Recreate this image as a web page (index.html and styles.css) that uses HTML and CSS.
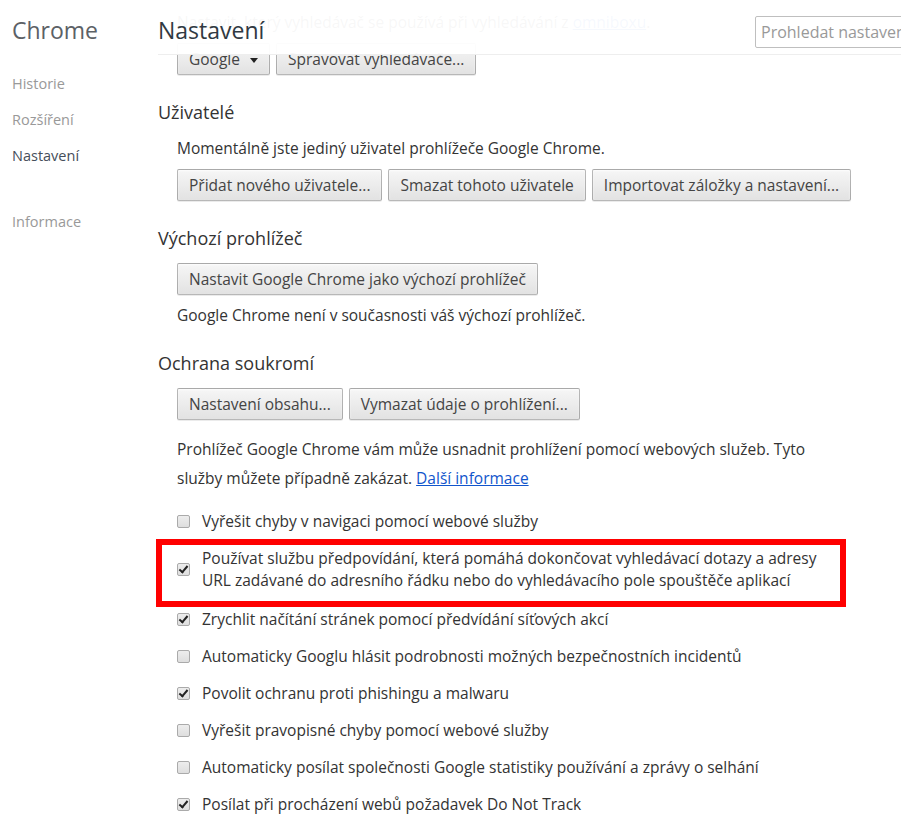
FILE: index.html
```html
<!DOCTYPE html>
<html lang="cs">
<head>
  <meta charset="UTF-8">
  <meta name="viewport" content="width=device-width, initial-scale=1.0">
  <title>Nastavení</title>
  <link rel="stylesheet" href="styles.css">
</head>
<body>

  <div class="layout">
    <nav class="sidebar">
      <h1 class="brand">Chrome</h1>
      <ul class="nav">
        <li>Historie</li>
        <li>Rozšíření</li>
        <li class="selected">Nastavení</li>
        <li class="separated">Informace</li>
      </ul>
    </nav>

    <main class="main">
      <header class="page-header">
        <h1 class="page-title">Nastavení</h1>
        <input type="search" class="search" placeholder="Prohledat nastavení">
      </header>

      <div class="content">
        <!-- sekce vyhledávání, odscrollovaná pod hlavičku -->
        <section class="section scrolled">
          <div class="section-body">
            <p class="text">Nastavit, který vyhledávač se používá při vyhledávání z <a href="#">omniboxu</a>.</p>
            <div class="buttons">
              <button class="btn">Google <span class="caret"></span></button>
              <button class="btn">Spravovat vyhledávače...</button>
            </div>
          </div>
        </section>

        <section class="section">
          <h3>Uživatelé</h3>
          <div class="section-body">
            <p class="text">Momentálně jste jediný uživatel prohlížeče Google Chrome.</p>
            <div class="buttons">
              <button class="btn">Přidat nového uživatele...</button>
              <button class="btn">Smazat tohoto uživatele</button>
              <button class="btn">Importovat záložky a nastavení...</button>
            </div>
          </div>
        </section>

        <section class="section">
          <h3>Výchozí prohlížeč</h3>
          <div class="section-body">
            <div class="buttons">
              <button class="btn">Nastavit Google Chrome jako výchozí prohlížeč</button>
            </div>
            <p class="text after-buttons">Google Chrome není v současnosti váš výchozí prohlížeč.</p>
          </div>
        </section>

        <section class="section">
          <h3>Ochrana soukromí</h3>
          <div class="section-body">
            <div class="buttons">
              <button class="btn">Nastavení obsahu...</button>
              <button class="btn">Vymazat údaje o prohlížení...</button>
            </div>
            <p class="text note">Prohlížeč Google Chrome vám může usnadnit prohlížení pomocí webových služeb. Tyto služby můžete případně zakázat. <a href="#">Další informace</a></p>

            <div class="checks">
              <label class="check"><span class="box"></span><span>Vyřešit chyby v navigaci pomocí webové služby</span></label>
              <label class="check highlight"><span class="box checked"></span><span>Používat službu předpovídání, která pomáhá dokončovat vyhledávací dotazy a adresy URL zadávané do adresního řádku nebo do vyhledávacího pole spouštěče aplikací</span></label>
              <label class="check"><span class="box checked"></span><span>Zrychlit načítání stránek pomocí předvídání síťových akcí</span></label>
              <label class="check"><span class="box"></span><span>Automaticky Googlu hlásit podrobnosti možných bezpečnostních incidentů</span></label>
              <label class="check"><span class="box checked"></span><span>Povolit ochranu proti phishingu a malwaru</span></label>
              <label class="check"><span class="box"></span><span>Vyřešit pravopisné chyby pomocí webové služby</span></label>
              <label class="check"><span class="box"></span><span>Automaticky posílat společnosti Google statistiky používání a zprávy o selhání</span></label>
              <label class="check"><span class="box checked"></span><span>Posílat při procházení webů požadavek Do Not Track</span></label>
            </div>
          </div>
        </section>
      </div>
    </main>
  </div>

</body>
</html>
```

FILE: styles.css
```css
body {
  margin: 0;
  font-family: "Open Sans", "Noto Sans", sans-serif;
  font-size: 15.5px;
  color: #333;
  background-color: #fff;
}

.layout {
  display: flex;
  height: 821px;
  overflow: hidden;
}

/* levý panel */
.sidebar {
  width: 146px;
  flex-shrink: 0;
  padding-left: 12px;
}

.brand {
  margin: 14px 0 0;
  font-size: 23px;
  font-weight: normal;
  line-height: 32px;
  color: #5c6166;
}

.nav {
  list-style: none;
  margin: 26px 0 0;
  padding: 0;
}

.nav li {
  font-size: 14.5px;
  line-height: 24px;
  margin-bottom: 12px;
  color: #999;
}

.nav li.selected {
  color: #464e5a;
}

.nav li.separated {
  margin-top: 42px;
}

/* hlavní část */
.main {
  flex: 1;
  min-width: 0;
  position: relative;
}

.page-header {
  position: absolute;
  top: 0;
  left: 0;
  right: 0;
  height: 54px;
  display: flex;
  align-items: flex-start;
  justify-content: space-between;
  background-color: rgba(255, 255, 255, 0.96);
  border-bottom: 1px solid #eee;
  overflow: hidden;
  z-index: 2;
}

.page-title {
  margin: 14px 0 0;
  font-size: 23px;
  font-weight: normal;
  line-height: 32px;
  color: #303942;
}

.search {
  margin-top: 16px;
  width: 170px;
  height: 32px;
  flex-shrink: 0;
  box-sizing: border-box;
  padding: 0 5px;
  border: 1px solid #bfbfbf;
  border-radius: 2px;
  margin-right: -24px;
  font-family: inherit;
  font-size: 16px;
  outline: none;
}

.search::placeholder {
  color: #999;
}

.content {
  padding-top: 11px;
}

.section {
  margin-top: 25px;
}

.section.scrolled {
  margin-top: 0;
}

.section h3 {
  margin: 0 0 13px;
  font-size: 18px;
  font-weight: normal;
  line-height: 24px;
}

.section-body {
  padding-left: 19px;
}

.text {
  margin: 0;
  line-height: 22px;
}

.text + .buttons {
  margin-top: 10px;
}

.after-buttons {
  margin-top: 9px;
}

.note {
  margin-top: 15px;
  line-height: 29px;
  max-width: 655px;
}

a {
  color: #15c;
}

.buttons {
  display: flex;
  gap: 6px;
}

.btn {
  height: 32px;
  padding: 0 11px;
  flex-shrink: 0;
  white-space: nowrap;
  font-family: inherit;
  font-size: 15.5px;
  color: #444;
  background: linear-gradient(#f6f6f6, #e2e2e2);
  border: 1px solid rgba(0, 0, 0, 0.25);
  border-radius: 2px;
  box-shadow: 0 1px 0 rgba(0, 0, 0, 0.08), inset 0 1px 2px rgba(255, 255, 255, 0.75);
  cursor: pointer;
}

.caret {
  display: inline-block;
  margin-left: 6px;
  vertical-align: middle;
  border-left: 4px solid transparent;
  border-right: 4px solid transparent;
  border-top: 5px solid #222;
}

/* zaškrtávací políčka */
.checks {
  margin-top: 17px;
  max-width: 655px;
  display: flex;
  flex-direction: column;
  gap: 15px;
}

.check {
  display: flex;
  align-items: center;
  gap: 12px;
  line-height: 22px;
  position: relative;
}

.box {
  width: 13px;
  height: 13px;
  flex-shrink: 0;
  box-sizing: border-box;
  border: 1px solid #aaa;
  border-radius: 2px;
  background: linear-gradient(#ededed, #dedede);
  position: relative;
}

.box.checked::after {
  content: "";
  position: absolute;
  left: 3px;
  top: 0;
  width: 3px;
  height: 7px;
  border-right: 2.5px solid #222;
  border-bottom: 2.5px solid #222;
  transform: rotate(40deg);
}

.highlight {
  padding-right: 10px;
  margin-bottom: 2px;
}

/* červený rámeček zvýraznění */
.highlight::after {
  content: "";
  position: absolute;
  left: -21px;
  top: -8px;
  width: 690px;
  bottom: -16px;
  border: 6px solid #f00;
  box-sizing: border-box;
}
```
